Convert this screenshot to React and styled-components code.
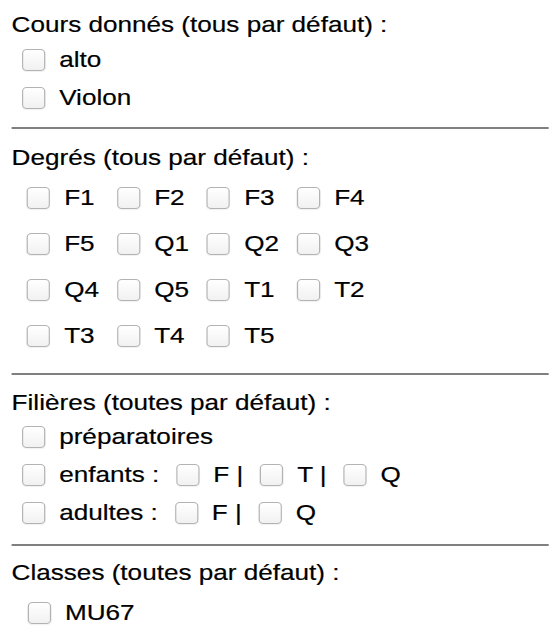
import React from 'react';
import styled, { createGlobalStyle } from 'styled-components';

const GlobalStyle = createGlobalStyle`
  html, body {
    margin: 0;
    padding: 0;
    background: #fff;
    overflow: hidden;
  }
`;

// the reference is a slightly widened capture, so the whole form is stretched sideways
const Page = styled.div`
  width: 477.6px;
  box-sizing: border-box;
  padding: 11.5px 4.6px 0 10px;
  transform: scaleX(1.16);
  transform-origin: 0 0;
  font-family: "Liberation Sans", Arial, Helvetica, sans-serif;
  font-size: 22.5px;
  color: #000;
  -webkit-text-stroke: 0.2px #000;
`;

const Title = styled.div`
  line-height: 26px;
  height: 26px;
  white-space: nowrap;
`;

const Rule = styled.hr`
  border: 0;
  height: 2px;
  background: #808080;
  margin: ${p => p.$top}px 0 0 -0.5px;
`;

const Section = styled.section`
  margin-top: ${p => p.$top || 0}px;
`;

const List = styled.div`
  display: flex;
  flex-direction: column;
  margin: ${p => p.$gap}px 0 0 ${p => p.$indent}px;
`;

const Row = styled.div`
  display: flex;
  align-items: center;
  gap: 14.5px;
  height: 38px;
  white-space: nowrap;
`;

const Grid = styled.div`
  display: grid;
  grid-template-columns: repeat(4, 77.6px);
  grid-auto-rows: 46px;
  align-items: center;
  margin: ${p => p.$gap}px 0 0 ${p => p.$indent}px;
`;

const Choice = styled.label`
  display: flex;
  align-items: center;
  gap: 12px;
  line-height: 26px;
  white-space: nowrap;
`;

const Box = styled.input.attrs({ type: 'checkbox' })`
  appearance: none;
  -webkit-appearance: none;
  margin: 0;
  flex: none;
  width: 20px;
  height: 22px;
  box-sizing: border-box;
  border: 1px solid #b3b3b3;
  border-radius: 4px;
  background: linear-gradient(#ffffff, #f1f1f1);
  box-shadow: 0 1px 1px rgba(0, 0, 0, 0.06);
`;

const Option = ({ children }) => (
  <Choice>
    <Box />
    <span>{children}</span>
  </Choice>
);

const degres = ['F1', 'F2', 'F3', 'F4', 'F5', 'Q1', 'Q2', 'Q3', 'Q4', 'Q5', 'T1', 'T2', 'T3', 'T4', 'T5'];

export default function App() {
  return (
    <>
      <GlobalStyle />
      <Page>
        <Section>
          <Title>Cours donnés (tous par défaut) :</Title>
          <List $gap={3.5} $indent={9}>
            <Row><Option>alto</Option></Row>
            <Row><Option>Violon</Option></Row>
          </List>
        </Section>
        <Rule $top={10} />

        <Section $top={15.5}>
          <Title>Degrés (tous par défaut) :</Title>
          <Grid $gap={4.5} $indent={13.3}>
            {degres.map(d => (
              <Option key={d}>{d}</Option>
            ))}
          </Grid>
        </Section>
        <Rule $top={14} />

        <Section $top={15}>
          <Title>Filières (toutes par défaut) :</Title>
          <List $gap={2} $indent={9}>
            <Row><Option>préparatoires</Option></Row>
            <Row>
              <Option>enfants :</Option>
              <Option>F |</Option>
              <Option>T |</Option>
              <Option>Q</Option>
            </Row>
            <Row>
              <Option>adultes :</Option>
              <Option>F |</Option>
              <Option>Q</Option>
            </Row>
          </List>
        </Section>
        <Rule $top={12} />

        <Section $top={14}>
          <Title>Classes (toutes par défaut) :</Title>
          <List $gap={7.5} $indent={14}>
            <Row><Option>MU67</Option></Row>
          </List>
        </Section>
      </Page>
    </>
  );
}
